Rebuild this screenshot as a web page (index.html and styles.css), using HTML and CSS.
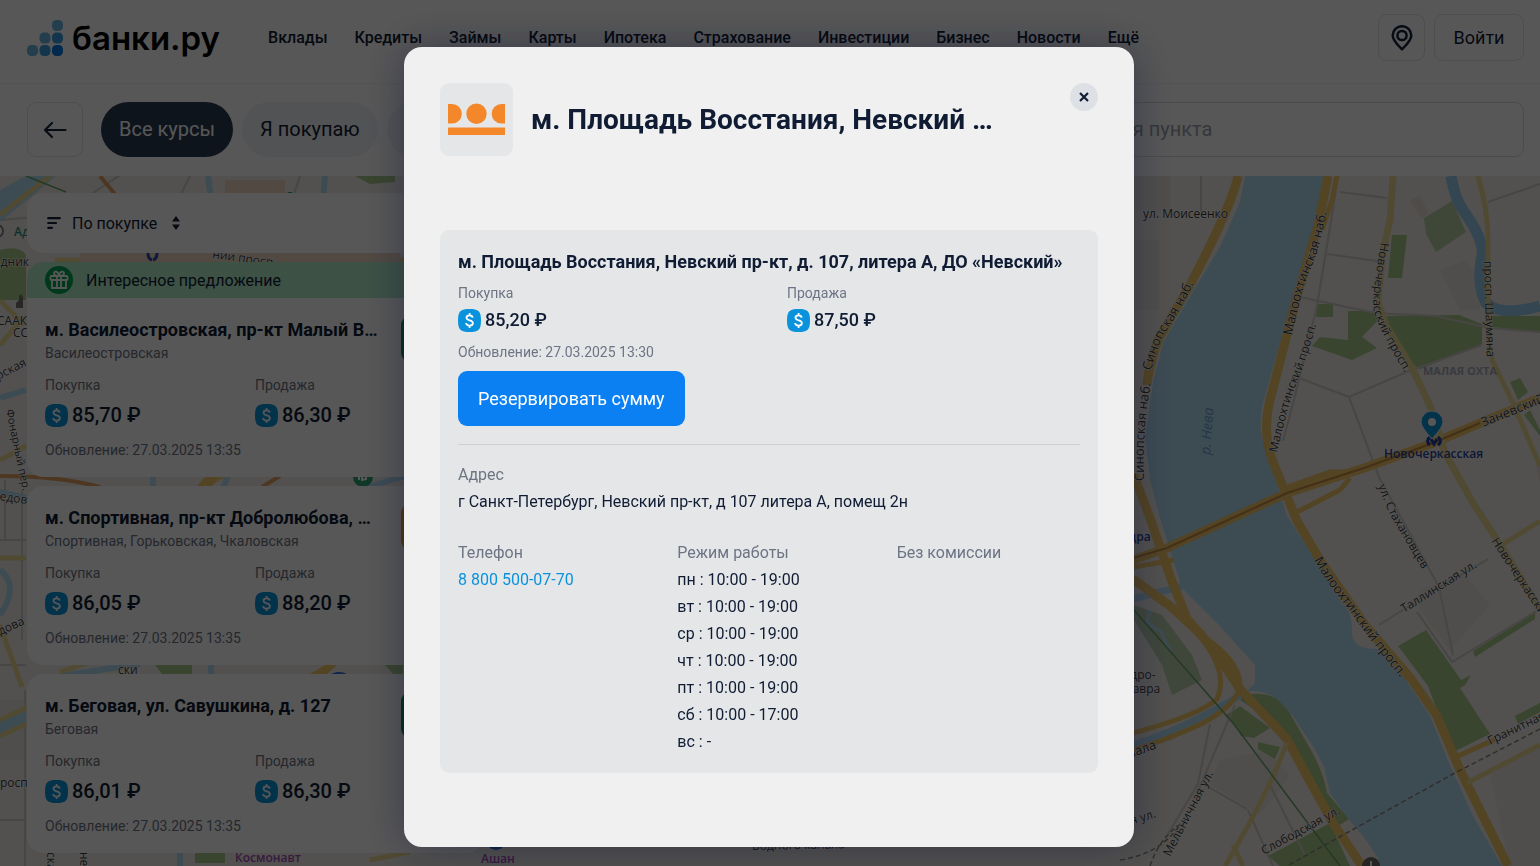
FILE: index.html
```html
<!DOCTYPE html>
<html lang="ru">
<head>
<meta charset="utf-8">
<meta name="viewport" content="width=device-width, initial-scale=1">
<title>Курсы валют — Банки.ру</title>
<link rel="stylesheet" href="styles.css">
</head>
<body>
<svg class="defs" aria-hidden="true">
  <symbol id="usd" viewBox="0 0 23 23">
    <path d="M11.500 0C20.500 0 23 2 23 11.500S20.500 23 11.500 23 0 21 0 11.500 2.500 0 11.500 0Z" fill="#0a93dc"/>
    <path d="M14.700 8.700c-.2-1.500-1.300-2.300-3.100-2.300-1.900 0-3.100 1-3.100 2.400 0 3.400 6.400 1.700 6.400 5.200 0 1.600-1.300 2.600-3.300 2.600-2.100 0-3.300-1-3.500-2.600M11.600 4v2.400M11.600 16.600V19" fill="none" stroke="#fff" stroke-width="1.800"/>
  </symbol>
</svg>

<div class="page">
  <header class="header">
    <a class="logo" href="#">
      <svg class="logo-mark" viewBox="0 0 36 36" aria-hidden="true">
        <rect x="25" y="0" width="11" height="11" rx="4.500" fill="#6bb5e0"/>
        <rect x="12.500" y="12.500" width="11" height="11" rx="4.500" fill="#6bb5e0"/>
        <rect x="25" y="12.500" width="11" height="11" rx="4.500" fill="#3d9fe0"/>
        <rect x="0" y="25" width="11" height="11" rx="4.500" fill="#6bb5e0"/>
        <rect x="12.500" y="25" width="11" height="11" rx="4.500" fill="#3d9fe0"/>
        <rect x="25" y="25" width="11" height="11" rx="4.500" fill="#0078e0"/>
      </svg>
      <span>банки.ру</span>
    </a>
    <nav class="nav">
      <a href="#">Вклады</a><a href="#">Кредиты</a><a href="#">Займы</a><a href="#">Карты</a><a href="#">Ипотека</a><a href="#">Страхование</a><a href="#">Инвестиции</a><a href="#">Бизнес</a><a href="#">Новости</a><a href="#">Ещё</a>
    </nav>
    <button class="btn-outline btn-region" aria-label="Выбрать город">
      <svg width="22" height="26" viewBox="0 0 22 26" fill="none" stroke="#16243c" stroke-width="2.500" stroke-linejoin="round"><path d="M11 24.300C7 20.300 1.700 15.600 1.700 10.500a9.300 9.300 0 0 1 18.600 0c0 5.100-5.300 9.800-9.300 13.800Z"/><circle cx="11" cy="10.500" r="4.600"/></svg>
    </button>
    <button class="btn-outline btn-login">Войти</button>
  </header>

  <div class="filters">
    <button class="btn-outline btn-back" aria-label="Назад">
      <svg width="24" height="18" viewBox="0 0 24 18" fill="none" stroke="#16243c" stroke-width="2.200" stroke-linecap="round" stroke-linejoin="round"><path d="M22.500 9H2M9 2 2 9l7 7"/></svg>
    </button>
    <button class="chip chip-active">Все курсы</button>
    <button class="chip">Я покупаю</button>
    <button class="chip">Я продаю</button>
    <input class="search" type="search" aria-label="Поиск" placeholder="Адрес, метро или название для пункта">
  </div>

  <main class="main">
    <svg class="map" viewBox="0 176 1540 690" preserveAspectRatio="xMidYMid slice" aria-hidden="true">
      <defs>
        <path id="t1" d="M1151 371Q1158 342 1170 325T1197 276"/>
        <path id="t2" d="M1144 481Q1142 430 1152 376"/>
        <path id="t3" d="M1292 336Q1301 290 1311 268T1329 199"/>
        <path id="t4" d="M1277 453Q1289 400 1298 380T1320 310"/>
        <path id="t5" d="M1381 242Q1371 300 1374 311Q1378 330 1412 384"/>
        <path id="t6" d="M1484 261L1487 370"/>
        <path id="t7" d="M1483 427L1560 396"/>
        <path id="t8" d="M1378 486L1390 515L1430 582"/>
        <path id="t9" d="M1404 613L1490 559"/>
        <path id="t10" d="M1491 541L1570 660"/>
        <path id="t11" d="M1314 560Q1330 588 1350 611Q1375 648 1416 696"/>
        <path id="t12" d="M1490 745L1570 707"/>
        <path id="t13" d="M1170 857L1218 765"/>
        <path id="t14" d="M1264 855L1352 807"/>
        <path id="t15" d="M6 410Q14 450 25 500"/>
      </defs>
      <rect y="176" width="1540" height="690" fill="#efece6"/>
      <!-- city blocks -->
      <g fill="#e8e5df">
        <path d="M1134 176h36v35h-36zM1134 240h25v70h-25zM1420 590l45-15 25 30-40 45-30-40zM1490 775l50-30v121h-30zM1220 760l45-10 25 25-30 40-50-30zM0 700h26v60H0z"/>
        <path d="M1440 270l25-10 15 20v30h-20z"/>
        <path fill="#eadfd9" d="M1410 200l10-5 8 18-6 6zM1536 467l4-2v18z"/>
      </g>
      <!-- parks -->
      <g fill="#a9c98a">
        <path fill="#b9d1a6" d="M1424 218l28-17 14 31-30 20-10-18z"/>
        <path d="M1392 235h15l-5 43h-14zM1384 316l75-1 23 9v20l-62 25-8-5zM1318 304h15v13h-17zM1348 311h26l5 8-17 18 15 11-25 12-40-14 8-9 28 3zM1510 382l10-4 8 14-10 8zM1524 415l6-5 10 20v6zM1492 316h48v16l-48-5z"/>
        <path d="M1398 646l28-16 35 50 10-5-6 10-5 3 30 46-37 18-25-66zM1473 651l62-38v6l-60 38zM1515 716l25-13v9l-22 12zM1245 695q30-6 43 15l20 35q15 25 19 48l22 26-12 8-28-52-46-60-23-15zM1240 706l30 22-16 10-13-2-3-8-13-12zM1258 742l22 5-5 12-17-10zM1268 856l62-33 20 43h-70z"/>
        <path fill="#bacfac" d="M1134 605l28 10 30 40 10 25-30 15-10-30-28-45z"/>
        <path d="M0 250q20-5 26 5v45H0z"/>
      </g>
      <!-- streets -->
      <g fill="none" stroke="#cfccc8" stroke-width="2">
        <path d="M1201 176v36M1340 192l47 6M1338 176l-7 45-14 85-22 90-12 45M1327 254l50 7M1300 297l75 16 60 3 55 12 50 4M1299 378l50 19 60-26 73-26M1349 397l30 80 60 110 14 68M1488 202l52-18M1379 625l38-24 71-42M1417 612l35 50 88-53M1210 724l-12 60-30 50M1235 705l-37 86M1205 785l42 24M1248 810l25 56M1270 785l35 70"/>
        <path d="M0 540h26M5 480v60M22 490v150M0 665h26M0 820h26M25 690v176M0 220l60-5 60-40M170 216l20-40M300 176l-10 30M300 215l90 10"/>
      </g>
      <!-- water -->
      <g fill="#b3dcf4">
        <path d="M1245 176L1240 202 1220 247 1192 293 1163 343 1153 383 1145 437 1150 480 1160 518 1168 543 1182 588 1220 626 1255 665V683L1247 691Q1267 690 1278 700L1293 716 1313 746 1324 766 1330 793 1350 821 1363 836 1377 856 1380 866H1502L1473 816 1450 766 1430 716 1403 676 1380 649Q1352 650 1352 633Q1352 610 1342 603L1320 566 1300 536 1287 516 1272 467 1262 437Q1259 420 1263 403L1280 343 1300 280 1317 213 1323 176Z"/>
        <path d="M0 190l26-14h30L0 222zM0 718l26-8v16L0 735zM40 866V852z"/>
      </g>
      <g fill="none" stroke="#b3dcf4">
        <path stroke="#97cdec" stroke-width="11" d="M1451 176Q1455 200 1465 213Q1484 240 1482 255Q1476 285 1486 303Q1500 317 1540 306"/>
        <path stroke-width="7" d="M1133 745Q1190 727 1247 691M1133 599l50-13"/>
        <path stroke-width="3" d="M1150 610l-3 12 14 10 10 20"/>
        <path stroke-width="6" d="M0 398l26-8M0 492l26 6M0 570q16 12 6 35l-6 10M208 176l5 40M325 176l-5 60-5 40M205 262l10-12M153 476v12M228 476l-5 12M405 476l-40 12M60 676l80-12M211 664v14M180 850v16"/>
      </g>
      <!-- main roads -->
      <g fill="none" stroke="#f3c766" stroke-linejoin="round">
        <path stroke-width="9" d="M1238 176Q1232 205 1190 285L1158 340Q1148 370 1147 385M1328 176L1318 225 1296 300 1270 400Q1261 435 1275 467L1297 521 1320 560 1365 625 1412 680 1437 716 1460 770 1508 866M1134 475L1150 518 1170 576 1187 619 1213 649 1240 689 1287 739 1307 776 1333 823 1362 866"/>
        <path stroke-width="5" d="M1337 176L1332 200 1322 230"/>
        <path stroke-width="9" d="M1540 398L1433 443 1367 467 1287 493 1167 548 1133 560M1133 579L1170 606 1203 636"/>
        <path stroke-width="5" d="M1203 636Q1238 660 1240 683Q1240 703 1203 723Q1170 739 1133 750M1205 643Q1228 675 1217 699Q1200 715 1133 733M1287 487L1330 472 1360 472M1297 512L1340 490 1350 478M1134 567l40-7M1215 650q20 20 22 40M1456 757l40-18"/>
      </g>
      <g fill="none" stroke="#edd892" stroke-width="7">
        <path d="M1393 176L1390 220 1382 257 1378 303 1387 327 1413 370 1432 410 1445 453 1473 503 1503 549 1540 610"/>
        <path stroke-width="5" d="M1478 176Q1488 210 1488 240L1488 303Q1486 340 1493 362L1513 403 1540 466M1287 742Q1270 790 1225 866M1233 845l10 21M1467 783l73-38M1500 546l40-25"/>
        <path stroke-width="5" d="M0 215l50-39M0 300l24 25M0 345l24-28M0 460l26-14M0 558h26M0 625l22 62M0 720l26-12M0 736l26-12M55 260h360M200 487l30-14M60 672l30-10M370 860l40-8"/>
      </g>
      <path fill="none" stroke="#c68a45" stroke-width="2" d="M1480 423L1433 443 1367 467 1287 493 1167 548 1133 558"/>
      <path fill="none" stroke="#e5a064" stroke-width="4" d="M100 176l18 22M0 476q60 0 100 11M262 487l18-11"/>
      <path fill="none" stroke="#8a8885" stroke-width="1.500" stroke-dasharray="5 3" d="M1540 729L1453 774 1287 866M1120 860q40-6 60-35M1150 866q10-30 35-45"/>
      <path fill="none" stroke="#6ba66b" stroke-width="1.500" d="M1133 609L1233 723 1340 866M26 176l40 16"/>
      <!-- strips visible between the list cards -->
      <path fill="#ecd5c2" d="M225 180h60v13h-60zM80 253h320v9H80z"/>
      <path fill="#a9c98a" d="M355 176l40 0v6l-25 2zM155 665h37v9h-30zM385 665h18v9h-10zM195 853h30v10h-30z"/>
      <path fill="#f3c766" d="M205 477h15l-8 9h-15zM310 674l15-9h12l-10 9z"/>
      <circle cx="363" cy="477" r="10" fill="#2fa374"/>
      <path d="M359 480v-5h3v5l4-1v-5" fill="none" stroke="#fff" stroke-width="2"/>
      <path d="M148 253q0 6 4 7M157 253q0 6-4 7" fill="none" stroke="#2b4bb0" stroke-width="3"/>
      <ellipse cx="339" cy="675" rx="8" ry="3" fill="#2f6fd8"/>
      <circle cx="496" cy="840" r="10" fill="#2b6fd0"/>
      <circle cx="-3" cy="231" r="6" fill="#fff" stroke="#85827f" stroke-width="2"/>
      <!-- street names -->
      <g class="street">
        <text x="1143" y="218">ул. Моисеенко</text>
        <text class="s14"><textPath href="#t1">Синопская наб.</textPath></text>
        <text class="s14"><textPath href="#t2">Синопская наб.</textPath></text>
        <text class="s14"><textPath href="#t3">Малоохтинская наб.</textPath></text>
        <text><textPath href="#t4">Малоохтинский просп.</textPath></text>
        <text><textPath href="#t5">Новочеркасский просп.</textPath></text>
        <text><textPath href="#t6">просп. Шаумяна</textPath></text>
        <text class="s14"><textPath href="#t7">Заневский</textPath></text>
        <text><textPath href="#t8">ул. Стахановцев</textPath></text>
        <text><textPath href="#t9">Таллинская ул.</textPath></text>
        <text><textPath href="#t10">Новочеркасский</textPath></text>
        <text class="s14"><textPath href="#t11">Малоохтинский просп.</textPath></text>
        <text><textPath href="#t12">Гранитная</textPath></text>
        <text><textPath href="#t13">Мельничная ул.</textPath></text>
        <text><textPath href="#t14">Слободская ул.</textPath></text>
        <text class="s10"><textPath href="#t15">Фонарный пер.</textPath></text>
        <text transform="translate(1114 830) rotate(-17)">ская ул.</text>
        <text class="s14" transform="translate(1122 761) rotate(-20)">анала</text>
        <text x="-6" y="266">адник</text>
        <text x="-3" y="325">СААК</text>
        <text x="13" y="337">СС</text>
        <text transform="translate(-2 380) rotate(-27)">рская</text>
        <text transform="translate(-8 499) rotate(8)">редов</text>
        <text transform="translate(-6 638) rotate(-24)">едова</text>
        <text x="0" y="787">росп</text>
        <text transform="translate(212 258) rotate(8)">ний просп.</text>
        <text x="118" y="674">ски</text>
        <text transform="translate(47 852) rotate(90)">ская</text>
        <text transform="translate(80 852) rotate(90)">ней</text>
        <text x="752" y="850" transform="rotate(-1 752 850)">Водного канала</text>
        <text x="1116" y="679">андро-</text>
        <text x="1116" y="693">я лавра</text>
      </g>
      <text class="district" x="1423" y="375">МАЛАЯ ОХТА</text>
      <text class="river" transform="translate(1210 455) rotate(-86)">р. Нева</text>
      <text class="metro" x="1384" y="458">Новочеркасская</text>
      <text class="metro" x="1121" y="541">ндра</text>
      <text class="metro violet" x="235" y="862">Космонавт</text>
      <text class="metro violet" x="481" y="863">Ашан</text>
      <text class="metro teal" x="14" y="236">Ад</text>
      <text class="metro teal" x="285" y="201">Опера</text>
      <path d="M16 308v-5l3-3v-4l2-2 2 3v11z" fill="#77736f"/>
      <circle cx="1371" cy="866" r="9" fill="#6e6b68"/>
      <path d="M1371 861v6" stroke="#fff" stroke-width="2"/>
      <!-- office pin -->
      <path d="M1430 437q-5 4 0 8M1438 437q5 4 0 8M1431 439l3 5 3-5" fill="none" stroke="#1f3fa8" stroke-width="3"/>
      <path d="M1432 439q-11-12-11-17a11 11 0 0 1 22 0q0 5-11 17Z" fill="#0a93dc" stroke="#e9f6ff"/>
      <circle cx="1432" cy="422" r="4" fill="#fff"/>
    </svg>

    <section class="offices" aria-label="Список отделений">
      <button class="sort">
        <svg width="14" height="12" viewBox="0 0 14 12" stroke="#16243c" stroke-width="2.200" stroke-linecap="round"><path d="M1.200 1.200h11.600M1.200 6h7.800M1.200 10.800h3.800"/></svg>
        <span>По покупке</span>
        <svg width="8" height="14" viewBox="0 0 8 14" fill="#16243c"><path d="M4 0 8 5.500H0ZM4 14 0 8.500h8Z"/></svg>
      </button>

      <article class="card">
        <div class="promo">
          <svg width="28" height="28" viewBox="0 0 28 28" fill="none" stroke="#fff" stroke-width="1.800"><circle cx="14" cy="14" r="14" fill="#00a550" stroke="none"/><rect x="5.500" y="10" width="17" height="4" rx="1"/><path d="M7 14v8h14v-8M12 10v12M16 10v12M14 10C10 10 9 8.500 9 7.300 9 5 13 4.500 14 9.500 15 4.500 19 5 19 7.300 19 8.500 18 10 14 10Z"/></svg>
          <span>Интересное предложение</span>
        </div>
        <div class="card-body">
          <div class="card-head"><div class="card-name"><h3>м. Василеостровская, пр-кт Малый В…</h3><p>Василеостровская</p></div><span class="bank bank-green"></span></div>
          <div class="rates">
            <div><span class="label">Покупка</span><span class="price"><svg><use href="#usd"/></svg>85,70 ₽</span></div>
            <div><span class="label">Продажа</span><span class="price"><svg><use href="#usd"/></svg>86,30 ₽</span></div>
          </div>
          <p class="updated">Обновление: 27.03.2025 13:35</p>
        </div>
      </article>

      <article class="card">
        <div class="card-body">
          <div class="card-head"><div class="card-name"><h3>м. Спортивная, пр-кт Добролюбова, …</h3><p>Спортивная, Горьковская, Чкаловская</p></div><span class="bank bank-orange"></span></div>
          <div class="rates">
            <div><span class="label">Покупка</span><span class="price"><svg><use href="#usd"/></svg>86,05 ₽</span></div>
            <div><span class="label">Продажа</span><span class="price"><svg><use href="#usd"/></svg>88,20 ₽</span></div>
          </div>
          <p class="updated">Обновление: 27.03.2025 13:35</p>
        </div>
      </article>

      <article class="card">
        <div class="card-body">
          <div class="card-head"><div class="card-name"><h3>м. Беговая, ул. Савушкина, д. 127</h3><p>Беговая</p></div><span class="bank bank-green"></span></div>
          <div class="rates">
            <div><span class="label">Покупка</span><span class="price"><svg><use href="#usd"/></svg>86,01 ₽</span></div>
            <div><span class="label">Продажа</span><span class="price"><svg><use href="#usd"/></svg>86,30 ₽</span></div>
          </div>
          <p class="updated">Обновление: 27.03.2025 13:35</p>
        </div>
      </article>
    </section>
  </main>
</div>

<div class="backdrop">
  <div class="modal" role="dialog" aria-modal="true" aria-labelledby="modal-title">
    <div class="modal-head">
      <div class="modal-logo">
        <svg width="58" height="34" viewBox="0 0 58 34" fill="#f5872b" aria-hidden="true"><path d="M0 1h4a9.800 9.800 0 0 1 0 19.600H0ZM57 1h-3.500a9.800 9.800 0 0 0 0 19.600H57ZM0 24.500h57V32H0Z"/><circle cx="28.500" cy="10.800" r="10.200"/></svg>
      </div>
      <h1 id="modal-title">м. Площадь Восстания, Невский …</h1>
      <button class="close" aria-label="Закрыть"><svg width="10" height="10" viewBox="0 0 10 10" stroke="#0f1c33" stroke-width="2.200"><path d="m1 1 8 8M9 1 1 9"/></svg></button>
    </div>

    <section class="office">
      <h2>м. Площадь Восстания, Невский пр-кт, д. 107, литера А, ДО «Невский»</h2>
      <div class="rates office-rates">
        <div><span class="label">Покупка</span><span class="price"><svg><use href="#usd"/></svg>85,20 ₽</span></div>
        <div><span class="label">Продажа</span><span class="price"><svg><use href="#usd"/></svg>87,50 ₽</span></div>
      </div>
      <p class="updated">Обновление: 27.03.2025 13:30</p>
      <button class="reserve">Резервировать сумму</button>
      <hr>
      <dl class="address"><dt>Адрес</dt><dd>г Санкт-Петербург, Невский пр-кт, д 107 литера А, помещ 2н</dd></dl>
      <dl class="details">
        <div><dt>Телефон</dt><dd><a href="tel:88005000770">8 800 500-07-70</a></dd></div>
        <div><dt>Режим работы</dt><dd>пн : 10:00 - 19:00</dd><dd>вт : 10:00 - 19:00</dd><dd>ср : 10:00 - 19:00</dd><dd>чт : 10:00 - 19:00</dd><dd>пт : 10:00 - 19:00</dd><dd>сб : 10:00 - 17:00</dd><dd>вс : -</dd></div>
        <div><dt>Без комиссии</dt></div>
      </dl>
    </section>
  </div>
</div>
</body>
</html>
```

FILE: styles.css
```css
* { box-sizing: border-box; }

body {
  margin: 0;
  background: #fff;
  color: #0f1c33;
  font: 400 16px/27px Roboto, "Liberation Sans", sans-serif;
}

h1, h2, h3, p, dl, dd { margin: 0; }
button, input { font: inherit; color: inherit; }
button { border: 0; padding: 0; background: none; cursor: pointer; }
a { color: inherit; text-decoration: none; }
.defs { position: absolute; width: 0; height: 0; }

.page {
  display: flex;
  flex-direction: column;
  height: 100vh;
  overflow: hidden;
}

/* Header */
.header {
  display: flex;
  align-items: center;
  padding: 14px 16px 22px 27px;
  border-bottom: 1px solid #f2f4f8;
}
.logo {
  display: flex;
  align-items: center;
  gap: 9px;
  color: #000;
  font: 600 33px/40px Inter, sans-serif;
}
.logo-mark { width: 36px; height: 36px; }
.nav {
  display: flex;
  gap: 27px;
  margin-left: 48px;
  margin-right: auto;
  font-weight: 500;
}
.btn-outline {
  display: flex;
  align-items: center;
  justify-content: center;
  border: 1px solid #dfe2e7;
  border-radius: 9px;
  background: #fff;
}
.btn-region { width: 47px; height: 47px; }
.btn-login {
  width: 90px;
  height: 47px;
  margin-left: 9px;
  font-size: 18px;
}

/* Filters */
.filters {
  display: flex;
  gap: 9px;
  padding: 18px 16px 19px 27px;
  font-size: 20px;
}
.btn-back { width: 56px; height: 55px; margin-right: 9px; }
.chip {
  height: 55px;
  padding: 0 18px;
  border-radius: 28px;
  background: #f1f3f8;
  white-space: nowrap;
}
.chip-active { background: #2b3b50; color: #fff; }
.search {
  flex: 1;
  min-width: 0;
  height: 55px;
  margin-left: 306px;
  padding: 0 18px 2px;
  border: 1px solid #d9dce2;
  border-radius: 9px;
  background: #fff;
  outline: 0;
}
.search::placeholder { color: #9aa1ad; opacity: 1; }

/* Map and office list */
.main {
  position: relative;
  flex: 1;
  min-height: 0;
  overflow: hidden;
}
.map {
  position: absolute;
  inset: 0;
  width: 100%;
  height: 100%;
}
.map text { font-family: "Open Sans", "Noto Sans", sans-serif; }
.street { font-size: 12px; fill: #3c3a38; }
.street text { stroke: #fff; stroke-width: 1px; paint-order: stroke; }
.street .s14 { font-size: 13px; }
.street .s10 { font-size: 11px; }
.district { font-size: 11px; font-weight: 700; fill: #a9a8bd; }
.river { font-size: 14px; font-style: italic; fill: #6f9fd0; }
.metro { font-size: 12px; font-weight: 600; fill: #2b45a0; }
.violet { fill: #a24fb5; }
.teal { fill: #1f8f7c; }

.offices {
  position: relative;
  display: flex;
  flex-direction: column;
  gap: 9px;
  width: 456px;
  margin: 17px 0 0 27px;
}
.sort {
  display: flex;
  align-items: center;
  height: 60px;
  padding: 0 20px;
  border-radius: 16px;
  background: #fff;
}
.sort span { margin: 0 15px 0 11px; }
.card { border-radius: 16px; background: #fff; overflow: hidden; }
.promo {
  display: flex;
  align-items: center;
  gap: 13px;
  height: 36px;
  padding: 0 18px;
  background: #b4eccb;
}
.card-body { padding: 18px; }
.card-head { display: flex; gap: 18px; margin-bottom: 14px; }
.card-name { flex: 1; min-width: 0; }
.card-name h3 {
  font-size: 18px;
  font-weight: 700;
  line-height: 28px;
  white-space: nowrap;
}
.card-name p, .label, .updated {
  color: #6d7484;
  font-size: 14px;
  line-height: 18px;
}
.bank { width: 64px; height: 46px; border-radius: 9px; }
.bank-green { background: #0c9a4f; }
.bank-orange { background: #f0a030; }
.rates { display: grid; grid-template-columns: 1fr 1fr; }
.label { display: block; margin-bottom: 7px; }
.price {
  display: flex;
  align-items: center;
  gap: 4px;
  font-size: 20px;
  font-weight: 500;
  line-height: 28px;
}
.price svg { width: 23px; height: 23px; }
.updated { margin-top: 12px; }

/* Modal */
.backdrop {
  position: fixed;
  inset: 0;
  display: flex;
  justify-content: center;
  padding: 47px 19px 19px 17px;
  background: rgba(0, 0, 0, .66);
}
.modal {
  flex: 0 1 730px;
  min-width: 0;
  padding: 36px;
  border-radius: 18px;
  background: #f0f0f0;
  box-shadow: 0 0 40px rgba(10, 16, 50, .4);
  overflow: auto;
}
.modal-head {
  display: flex;
  align-items: flex-start;
  margin-bottom: 74px;
}
.modal-logo {
  display: flex;
  flex: none;
  align-items: center;
  justify-content: center;
  width: 73px;
  height: 73px;
  margin-right: 18px;
  border-radius: 9px;
  background: #e5e6e8;
}
.modal-head h1 {
  flex: 1;
  min-width: 0;
  font-size: 28px;
  font-weight: 700;
  line-height: 73px;
  white-space: nowrap;
}
.close {
  display: flex;
  align-items: center;
  justify-content: center;
  width: 28px;
  height: 28px;
  border-radius: 50%;
  background: #dde1e5;
}
.office {
  padding: 18px;
  border-radius: 9px;
  background: #e5e6e8;
}
.office h2 { font-size: 18px; font-weight: 700; line-height: 27px; }
.office-rates { gap: 36px; margin-top: 9px; }
.office .label { margin-bottom: 4px; }
.office .price { font-size: 18px; }
.office .updated { margin: 9px 0 10px; }
.reserve {
  height: 55px;
  padding: 0 20px;
  border-radius: 9px;
  background: #0b80f2;
  color: #fff;
  font-size: 18px;
}
.office hr {
  height: 1px;
  margin: 18px 0 16px;
  border: 0;
  background: #cdd0d5;
}
.office dt { color: #6d7484; }
.details {
  display: grid;
  grid-template-columns: repeat(3, 1fr);
  gap: 36px;
  margin-top: 24px;
}
.details a { color: #0a93dc; }
```
